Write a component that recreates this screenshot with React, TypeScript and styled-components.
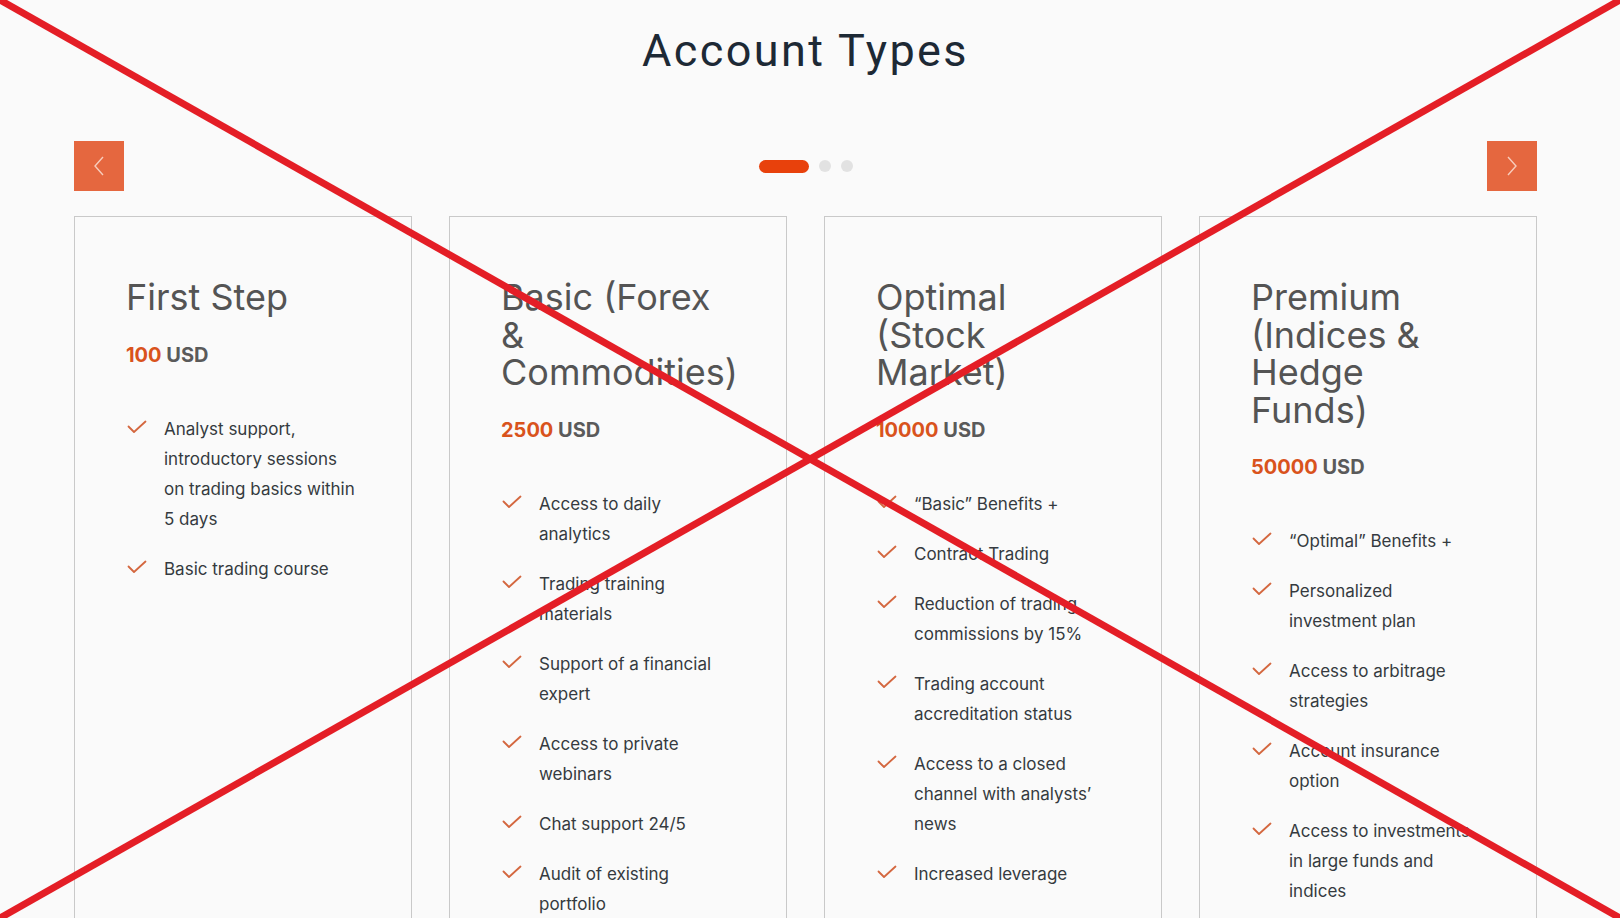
import React, { ReactElement } from 'react';
import styled, { createGlobalStyle } from 'styled-components';

const GlobalStyle = createGlobalStyle`
  html, body {
    margin: 0;
    padding: 0;
    background: #fafafa;
    overflow: hidden;
  }
  * {
    box-sizing: border-box;
  }
`;

const Page = styled.div`
  position: relative;
  height: 918px;
  overflow: hidden;
  background: #fafafa;
  font-family: Inter, 'Noto Sans', sans-serif;
`;

const Section = styled.section`
  width: 1463px;
  margin-left: 74px;
  padding-top: 24px;
`;

const Heading = styled.h1`
  margin: 0;
  text-align: center;
  font-family: Roboto, 'Liberation Sans', sans-serif;
  font-weight: 400;
  font-size: 45px;
  line-height: 54px;
  letter-spacing: 2.4px;
  color: #1d2935;
`;

const Controls = styled.div`
  display: flex;
  align-items: center;
  justify-content: space-between;
  margin-top: 63px;
`;

const ArrowButton = styled.button`
  width: 50px;
  height: 50px;
  border: none;
  padding: 0;
  background: #e5673f;
  display: flex;
  align-items: center;
  justify-content: center;
  cursor: pointer;
`;

const Dots = styled.div`
  display: flex;
  align-items: center;
  gap: 10px;
`;

const Dot = styled.span<{ $active?: boolean }>`
  display: block;
  height: ${(p) => (p.$active ? '13px' : '12px')};
  width: ${(p) => (p.$active ? '50px' : '12px')};
  border-radius: 7px;
  background: ${(p) => (p.$active ? '#e8410c' : '#e2e2e2')};
`;

const CardGrid = styled.div`
  display: grid;
  grid-template-columns: repeat(4, 338px);
  gap: 37px;
  margin-top: 25px;
`;

const Card = styled.div`
  border: 1px solid #c9c9c9;
  min-height: 760px;
  padding: 62px 24px 0 51px;
`;

const CardTitle = styled.h2`
  margin: 0;
  max-width: 236px;
  font-size: 36px;
  line-height: 37.5px;
  font-weight: 400;
  color: #545454;
`;

const Price = styled.div`
  margin-top: 26px;
  font-size: 20px;
  line-height: 24px;
  font-weight: 700;
  color: #5a5a5a;
`;

const Amount = styled.span`
  color: #d9531c;
`;

const FeatureList = styled.ul`
  list-style: none;
  margin: 47px 0 0;
  padding: 0;
  display: flex;
  flex-direction: column;
  gap: 20px;
`;

const Feature = styled.li`
  display: flex;
  align-items: flex-start;
  gap: 17px;
  font-size: 17px;
  line-height: 30px;
  color: #353a40;
  white-space: pre-line;
`;

const CheckMark = styled.svg`
  flex: none;
  margin-top: 6px;
  margin-left: 1px;
`;

const Cross = styled.svg`
  position: absolute;
  inset: 0;
  pointer-events: none;
`;

interface Plan {
  title: string;
  amount: string;
  features: string[];
}

const plans: Plan[] = [
  {
    title: 'First Step',
    amount: '100',
    features: [
      'Analyst support,\nintroductory sessions\non trading basics within\n5 days',
      'Basic trading course',
    ],
  },
  {
    title: 'Basic (Forex & Commodities)',
    amount: '2500',
    features: [
      'Access to daily\nanalytics',
      'Trading training\nmaterials',
      'Support of a financial\nexpert',
      'Access to private\nwebinars',
      'Chat support 24/5',
      'Audit of existing\nportfolio',
    ],
  },
  {
    title: 'Optimal (Stock Market)',
    amount: '10000',
    features: [
      '\u201cBasic\u201d Benefits +',
      'Contract Trading',
      'Reduction of trading\ncommissions by 15%',
      'Trading account\naccreditation status',
      'Access to a closed\nchannel with analysts\u2019\nnews',
      'Increased leverage',
    ],
  },
  {
    title: 'Premium (Indices & Hedge Funds)',
    amount: '50000',
    features: [
      '\u201cOptimal\u201d Benefits +',
      'Personalized\ninvestment plan',
      'Access to arbitrage\nstrategies',
      'Account insurance\noption',
      'Access to investments\nin large funds and\nindices',
    ],
  },
];

function Check(): ReactElement {
  return (
    <CheckMark width="20" height="14" viewBox="0 0 20 14">
      <path d="M1.5 6.5 L7 12 L18.5 1.5" fill="none" stroke="#d4673f" strokeWidth="1.8" strokeLinecap="round" strokeLinejoin="round" />
    </CheckMark>
  );
}

function Chevron({ left }: { left?: boolean }): ReactElement {
  return (
    <svg width="12" height="22" viewBox="0 0 12 22">
      <path
        d={left ? 'M10 2 L2 11 L10 20' : 'M2 2 L10 11 L2 20'}
        fill="none"
        stroke="#f7cdbd"
        strokeWidth="1.4"
      />
    </svg>
  );
}

function App(): ReactElement {
  return (
    <Page>
      <GlobalStyle />
      <Section>
        <Heading>Account Types</Heading>
        <Controls>
          <ArrowButton aria-label="Previous">
            <Chevron left />
          </ArrowButton>
          <Dots>
            <Dot $active />
            <Dot />
            <Dot />
          </Dots>
          <ArrowButton aria-label="Next">
            <Chevron />
          </ArrowButton>
        </Controls>
        <CardGrid>
          {plans.map((plan) => (
            <Card key={plan.title}>
              <CardTitle>{plan.title}</CardTitle>
              <Price>
                <Amount>{plan.amount}</Amount> USD
              </Price>
              <FeatureList>
                {plan.features.map((f) => (
                  <Feature key={f}>
                    <Check />
                    <span>{f}</span>
                  </Feature>
                ))}
              </FeatureList>
            </Card>
          ))}
        </CardGrid>
      </Section>
      <Cross width="1620" height="918" viewBox="0 0 1620 918">
        <line x1="0" y1="0" x2="1620" y2="918" stroke="#e41e26" strokeWidth="7" />
        <line x1="1620" y1="0" x2="0" y2="918" stroke="#e41e26" strokeWidth="7" />
      </Cross>
    </Page>
  );
}

export default App;
